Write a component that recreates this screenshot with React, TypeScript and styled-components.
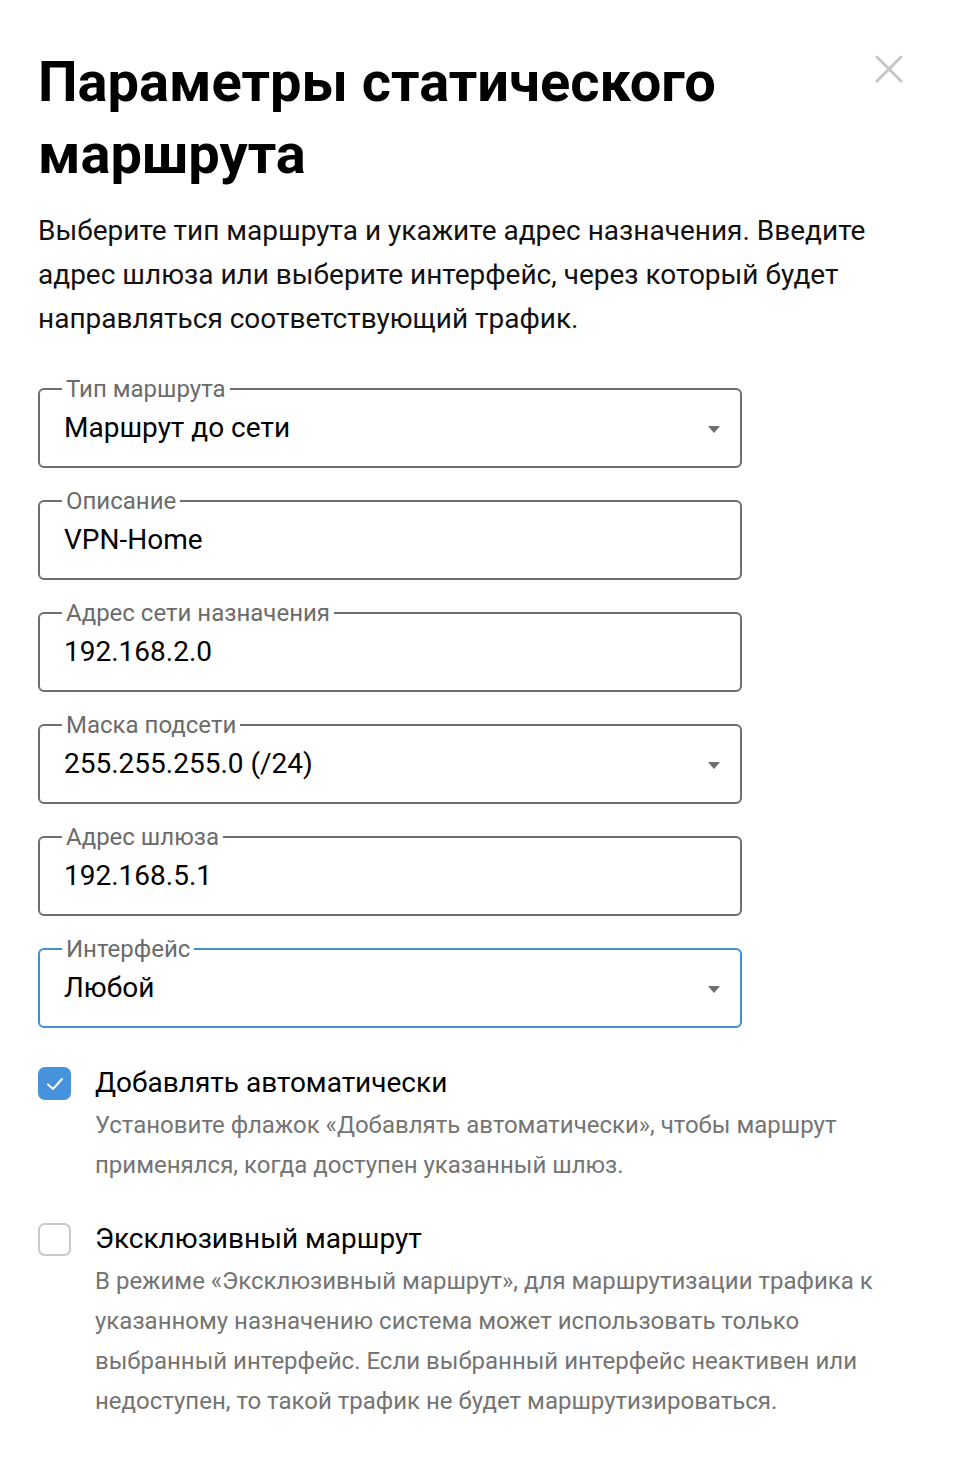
import React from 'react';
import styled, { createGlobalStyle } from 'styled-components';

const GlobalStyle = createGlobalStyle`
  html, body {
    margin: 0;
    padding: 0;
    background: #ffffff;
  }
  body {
    font-family: Roboto, 'Noto Sans', sans-serif;
    color: #000;
  }
`;

const Dialog = styled.div`
  position: relative;
  box-sizing: border-box;
  width: 954px;
  min-height: 1464px;
  padding: 46px 38px 40px 38px;
`;

const CloseButton = styled.button`
  position: absolute;
  top: 52px;
  right: 48px;
  width: 34px;
  height: 34px;
  padding: 0;
  border: none;
  background: transparent;
  cursor: pointer;
  display: flex;
  align-items: center;
  justify-content: center;
`;

const Title = styled.h1`
  margin: 0;
  font-size: 56px;
  line-height: 72px;
  font-weight: 700;
  width: 780px;
`;

const Intro = styled.p`
  margin: 19px 0 0;
  max-width: 862px;
  font-size: 28px;
  line-height: 44px;
  color: #111;
`;

const Fields = styled.div`
  display: flex;
  flex-direction: column;
  gap: 21px;
  margin-top: 36px;
  width: 704px;
`;

const Field = styled.fieldset<{ $focused?: boolean }>`
  position: relative;
  box-sizing: border-box;
  margin: 0;
  min-width: 0;
  padding: 11px 60px 22px 24px;
  border: 2px solid ${(p) => (p.$focused ? '#3f8fd8' : '#6e6e6e')};
  border-radius: 6px;
`;

const Legend = styled.legend`
  padding: 0 4px;
  margin-left: -2px;
  font-size: 24px;
  line-height: 24px;
  color: #6b6b6b;
`;

const Value = styled.div`
  font-size: 28px;
  line-height: 32px;
  color: #000;
`;

const Caret = styled.span`
  position: absolute;
  right: 20px;
  top: 25px;
  width: 0;
  height: 0;
  border-left: 6px solid transparent;
  border-right: 6px solid transparent;
  border-top: 7px solid #6e6e6e;
`;

const Options = styled.div`
  display: flex;
  flex-direction: column;
  gap: 34px;
  margin-top: 35px;
`;

const Option = styled.div`
  display: grid;
  grid-template-columns: 33px 1fr;
  column-gap: 24px;
  align-items: start;
`;

const Box = styled.span<{ $checked?: boolean }>`
  box-sizing: border-box;
  width: 33px;
  height: 33px;
  margin-top: 4px;
  border-radius: 7px;
  background: ${(p) => (p.$checked ? '#4693dc' : '#fff')};
  border: ${(p) => (p.$checked ? 'none' : '2px solid #c9c9c9')};
  display: flex;
  align-items: center;
  justify-content: center;
`;

const OptionLabel = styled.div`
  font-size: 28px;
  line-height: 40px;
  color: #000;
`;

const Hint = styled.div`
  margin-top: 2px;
  font-size: 24px;
  line-height: 40px;
  color: #747474;
  max-width: 790px;
`;

type FieldData = { label: string; value: string; select?: boolean; focused?: boolean };

const fields: FieldData[] = [
  { label: 'Тип маршрута', value: 'Маршрут до сети', select: true },
  { label: 'Описание', value: 'VPN-Home' },
  { label: 'Адрес сети назначения', value: '192.168.2.0' },
  { label: 'Маска подсети', value: '255.255.255.0 (/24)', select: true },
  { label: 'Адрес шлюза', value: '192.168.5.1' },
  { label: 'Интерфейс', value: 'Любой', select: true, focused: true },
];

const App: React.FC = () => {
  return (
    <>
      <GlobalStyle />
      <Dialog>
        <CloseButton aria-label="Закрыть">
          <svg width="28" height="28" viewBox="0 0 28 28">
            <path d="M2 2 L26 26 M26 2 L2 26" stroke="#c6c6c6" strokeWidth="3" strokeLinecap="round" />
          </svg>
        </CloseButton>
        <Title>Параметры статического маршрута</Title>
        <Intro>
          Выберите тип маршрута и укажите адрес назначения. Введите адрес шлюза или выберите
          интерфейс, через который будет направляться соответствующий трафик.
        </Intro>

        <Fields>
          {fields.map((f) => (
            <Field key={f.label} $focused={f.focused}>
              <Legend>{f.label}</Legend>
              <Value>{f.value}</Value>
              {f.select && <Caret />}
            </Field>
          ))}
        </Fields>

        <Options>
          <Option>
            <Box $checked>
              <svg width="20" height="20" viewBox="0 0 20 20">
                <path d="M3 10.5 L8 15 L17 5" fill="none" stroke="#fff" strokeWidth="2" strokeLinecap="round" strokeLinejoin="round" />
              </svg>
            </Box>
            <div>
              <OptionLabel>Добавлять автоматически</OptionLabel>
              <Hint>
                Установите флажок «Добавлять автоматически», чтобы маршрут применялся, когда
                доступен указанный шлюз.
              </Hint>
            </div>
          </Option>
          <Option>
            <Box />
            <div>
              <OptionLabel>Эксклюзивный маршрут</OptionLabel>
              <Hint>
                В режиме «Эксклюзивный маршрут», для маршрутизации трафика к указанному
                назначению система может использовать только выбранный интерфейс. Если
                выбранный интерфейс неактивен или недоступен, то такой трафик не будет
                маршрутизироваться.
              </Hint>
            </div>
          </Option>
        </Options>
      </Dialog>
    </>
  );
};

export default App;
